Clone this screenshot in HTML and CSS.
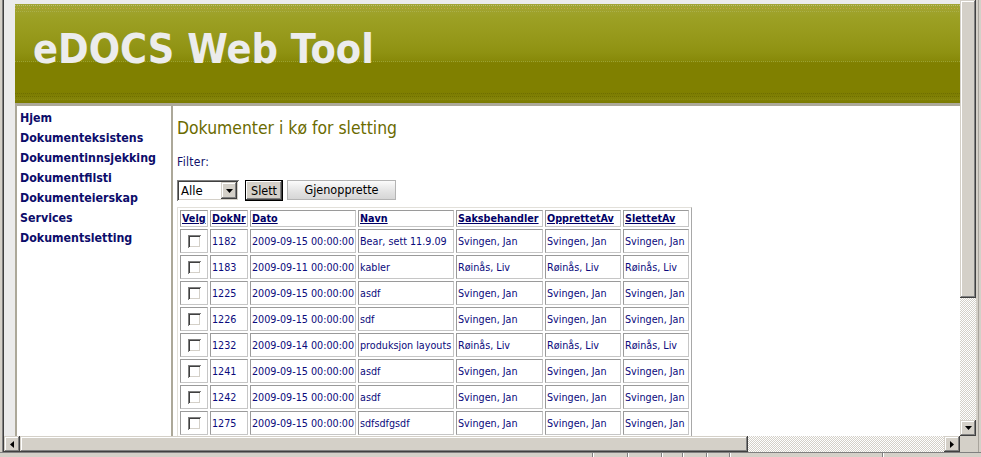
FILE: index.html
```html
<!DOCTYPE html>
<html lang="no">
<head>
<meta charset="utf-8">
<title>eDOCS Web Tool</title>
<link rel="stylesheet" href="styles.css">
</head>
<body>
<div class="window">
  <div class="main-row">
    <div class="frame-left"></div>
    <div class="viewport">
      <div class="page">
        <header class="banner">
          <h1 class="banner-title">eDOCS Web Tool</h1>
        </header>
        <div class="layout">
          <nav class="sidebar">
            <a class="nav-link" href="#">Hjem</a>
            <a class="nav-link" href="#">Dokumenteksistens</a>
            <a class="nav-link" href="#">Dokumentinnsjekking</a>
            <a class="nav-link" href="#">Dokumentfilsti</a>
            <a class="nav-link" href="#">Dokumenteierskap</a>
            <a class="nav-link" href="#">Services</a>
            <a class="nav-link" href="#">Dokumentsletting</a>
          </nav>
          <main class="content">
            <h2 class="page-title">Dokumenter i kø for sletting</h2>
            <div class="filter-label">Filter:</div>
            <div class="toolbar">
              <div class="select">
                <span class="select-value">Alle</span>
                <span class="select-btn"><svg width="7" height="4" viewBox="0 0 7 4"><path d="M0 0h7L3.5 4z" fill="#000"/></svg></span>
              </div>
              <button class="btn btn-default">Slett</button>
              <button class="btn btn-flat">Gjenopprette</button>
            </div>
            <table class="grid">
              <thead>
                <tr>
                  <th class="c-velg"><a href="#">Velg</a></th>
                  <th class="c-nr"><a href="#">DokNr</a></th>
                  <th class="c-dato"><a href="#">Dato</a></th>
                  <th class="c-navn"><a href="#">Navn</a></th>
                  <th class="c-saks"><a href="#">Saksbehandler</a></th>
                  <th class="c-opp"><a href="#">OpprettetAv</a></th>
                  <th class="c-slet"><a href="#">SlettetAv</a></th>
                </tr>
              </thead>
              <tbody>
                <tr><td class="cb"><span class="check"></span></td><td>1182</td><td>2009-09-15 00:00:00</td><td>Bear, sett 11.9.09</td><td>Svingen, Jan</td><td>Svingen, Jan</td><td>Svingen, Jan</td></tr>
                <tr><td class="cb"><span class="check"></span></td><td>1183</td><td>2009-09-11 00:00:00</td><td>kabler</td><td>Røinås, Liv</td><td>Røinås, Liv</td><td>Røinås, Liv</td></tr>
                <tr><td class="cb"><span class="check"></span></td><td>1225</td><td>2009-09-15 00:00:00</td><td>asdf</td><td>Svingen, Jan</td><td>Svingen, Jan</td><td>Svingen, Jan</td></tr>
                <tr><td class="cb"><span class="check"></span></td><td>1226</td><td>2009-09-15 00:00:00</td><td>sdf</td><td>Svingen, Jan</td><td>Svingen, Jan</td><td>Svingen, Jan</td></tr>
                <tr><td class="cb"><span class="check"></span></td><td>1232</td><td>2009-09-14 00:00:00</td><td>produksjon layouts</td><td>Røinås, Liv</td><td>Røinås, Liv</td><td>Røinås, Liv</td></tr>
                <tr><td class="cb"><span class="check"></span></td><td>1241</td><td>2009-09-15 00:00:00</td><td>asdf</td><td>Svingen, Jan</td><td>Svingen, Jan</td><td>Svingen, Jan</td></tr>
                <tr><td class="cb"><span class="check"></span></td><td>1242</td><td>2009-09-15 00:00:00</td><td>asdf</td><td>Svingen, Jan</td><td>Svingen, Jan</td><td>Svingen, Jan</td></tr>
                <tr><td class="cb"><span class="check"></span></td><td>1275</td><td>2009-09-15 00:00:00</td><td>sdfsdfgsdf</td><td>Svingen, Jan</td><td>Svingen, Jan</td><td>Svingen, Jan</td></tr>
              </tbody>
            </table>
          </main>
        </div>
      </div>
    </div>
    <div class="vscroll">
      <div class="vthumb"></div>
      <div class="track"></div>
      <div class="sb-btn"><svg width="7" height="4" viewBox="0 0 7 4"><path d="M0 0h7L3.5 4z" fill="#000"/></svg></div>
    </div>
    <div class="frame-right"></div>
  </div>
  <div class="hscroll-row">
    <div class="frame-left"></div>
    <div class="hscroll">
      <div class="sb-btn"><svg width="4" height="7" viewBox="0 0 4 7"><path d="M4 0v7L0 3.5z" fill="#000"/></svg></div>
      <div class="hthumb"></div>
      <div class="track"></div>
      <div class="sb-btn"><svg width="4" height="7" viewBox="0 0 4 7"><path d="M0 0v7l4-3.5z" fill="#000"/></svg></div>
    </div>
    <div class="corner"></div>
    <div class="frame-right"></div>
  </div>
  <div class="statusbar">
    <div class="status-panel w593"></div>
    <div class="status-panel w35"></div>
    <div class="status-panel w34"></div>
    <div class="status-panel w21"></div>
    <div class="status-panel w24"></div>
    <div class="status-panel w23"></div>
    <div class="status-panel w153"></div>
    <div class="status-panel last"></div>
  </div>
</div>
</body>
</html>
```
FILE: styles.css
```css
* { box-sizing: border-box; }
html, body { margin: 0; padding: 0; }
body {
  width: 981px;
  height: 457px;
  overflow: hidden;
  background: #d4d0c8;
  font-family: "DejaVu Sans Condensed", "DejaVu Sans", sans-serif;
}
.window {
  width: 981px;
  height: 457px;
  display: flex;
  flex-direction: column;
  background: #d4d0c8;
}
.main-row { display: flex; height: 436px; flex: none; }
.frame-left {
  width: 4px;
  flex: none;
  background: #d4d0c8;
  border-right: 1px solid #404040;
  box-shadow: inset -1px 0 0 #808080;
}
.frame-right {
  width: 5px;
  flex: none;
  background: #d4d0c8;
  box-shadow: inset 2px 0 0 #d4d0c8, inset 3px 0 0 #a8a49c;
}
.viewport {
  width: 956px;
  flex: none;
  overflow: hidden;
  background: #ebebeb;
}
.page {
  width: 1180px;
  padding: 4px 0 0 11px;
}
.banner {
  height: 102px;
  border-bottom: 3px solid #aca899;
  padding: 22px 0 0 18px;
  background:
    linear-gradient(90deg, #b9bd78 50%, transparent 50%) 0 1px / 2px 1px repeat-x,
    linear-gradient(90deg, #c9a548 34%, transparent 34%) 0 4px / 3px 1px repeat-x,
    linear-gradient(90deg, #aab04a 50%, transparent 50%) 1px 7px / 2px 1px repeat-x,
    linear-gradient(90deg, #9aa232 50%, transparent 50%) 0 57px / 2px 1px repeat-x,
    linear-gradient(90deg, #6e6e00 50%, transparent 50%) 0 89px / 2px 1px repeat-x,
    linear-gradient(90deg, #6e6e00 50%, transparent 50%) 1px 92px / 2px 1px repeat-x,
    linear-gradient(90deg, #8a8a10 50%, transparent 50%) 0 95px / 2px 1px repeat-x,
    linear-gradient(180deg, #a2a534 0, #9ca024 14px, #979a1c 30px, #8f9212 48px, #888a0a 56px, #808000 59px, #808000 88px, #7d7d02 90px, #838308 94px, #7a7a00 99px);
}
.banner-title {
  margin: 0;
  font: bold 41px/46px "DejaVu Sans Condensed", "DejaVu Sans", sans-serif;
  color: #ececec;
}
.layout { display: flex; min-height: 340px; }
.sidebar {
  width: 158px;
  flex: none;
  background: #fff;
  border-left: 2px solid #aca899;
  border-right: 2px solid #aca899;
  padding: 2px 0 0 3px;
}
.nav-link {
  display: block;
  font: bold 12.3px/20px "DejaVu Sans Condensed", "DejaVu Sans", sans-serif;
  color: #0c0c6a;
  text-decoration: none;
  white-space: nowrap;
}
.content {
  flex: 1;
  background: #fff;
  padding: 12px 0 0 4px;
}
.page-title {
  margin: 0;
  font: normal 17.4px/20px "DejaVu Sans Condensed", "DejaVu Sans", sans-serif;
  color: #6b6b00;
}
.filter-label {
  margin-top: 17px;
  font: 12px/15px "DejaVu Sans Condensed", "DejaVu Sans", sans-serif;
  letter-spacing: 0.3px;
  color: #10106a;
}
.toolbar {
  margin-top: 10px;
  display: flex;
  align-items: flex-start;
  height: 21px;
}
.select {
  width: 62px;
  height: 21px;
  display: flex;
  padding: 2px;
  background: #fff;
  box-shadow: inset 1px 1px 0 #808080, inset -1px -1px 0 #ffffff, inset 2px 2px 0 #404040, inset -2px -2px 0 #d4d0c8;
}
.select-value {
  flex: 1;
  padding-left: 2px;
  font: 13px/17px "DejaVu Sans Condensed", "DejaVu Sans", sans-serif;
  color: #000;
}
.select-btn {
  width: 16px;
  height: 17px;
  display: flex;
  align-items: center;
  justify-content: center;
  background: #d4d0c8;
  box-shadow: inset -1px -1px 0 #404040, inset 1px 1px 0 #d4d0c8, inset -2px -2px 0 #808080, inset 2px 2px 0 #fff;
}
.btn {
  height: 21px;
  padding: 0;
  font: 12.5px/19px "DejaVu Sans Condensed", "DejaVu Sans", sans-serif;
  color: #000;
  text-align: center;
}
.btn-default {
  width: 38px;
  margin-left: 6px;
  border: 1px solid #000;
  background: #d4d0c8;
  box-shadow: inset -1px -1px 0 #404040, inset 1px 1px 0 #fff, inset -2px -2px 0 #808080;
}
.btn-flat {
  width: 109px;
  height: 20px;
  margin-left: 4px;
  border: 1px solid #b4b4b4;
  line-height: 18px;
  background: linear-gradient(180deg, #fbfbfb 0, #eeeeee 30%, #e2e2e2 60%, #d6d6d6 100%);
}
.grid {
  margin-top: 6px;
  border-collapse: separate;
  border-spacing: 2px;
  border: 1px solid;
  border-color: #e2e0da #a8a8a8 #a8a8a8 #e2e0da;
  table-layout: fixed;
  width: 515px;
  font-family: "DejaVu Sans Condensed", "DejaVu Sans", sans-serif;
  font-size: 10.7px;
}
.grid th, .grid td {
  border: 1px solid;
  border-color: #9a9a9a #c6c6c6 #c6c6c6 #9a9a9a;
  padding: 0 1px;
  white-space: nowrap;
  overflow: hidden;
  text-align: left;
  vertical-align: middle;
}
.grid th { height: 17px; font-weight: bold; line-height: 13px; }
.grid th a { color: #000066; text-decoration: underline; }
.grid td { height: 24px; color: #0a0a7c; line-height: 13px; }
.c-velg { width: 28px; }
.c-nr { width: 38px; }
.c-dato { width: 106px; }
.c-navn { width: 96px; }
.c-saks { width: 87px; }
.c-opp { width: 76px; }
.c-slet { width: 66px; }
.grid td.cb { text-align: center; }
.check {
  display: inline-block;
  width: 13px;
  height: 13px;
  vertical-align: middle;
  background: #fff;
  box-shadow: inset 1px 1px 0 #808080, inset -1px -1px 0 #ffffff, inset 2px 2px 0 #404040, inset -2px -2px 0 #d4d0c8;
}
.vscroll {
  width: 16px;
  flex: none;
  display: flex;
  flex-direction: column;
}
.vthumb {
  height: 298px;
  flex: none;
  background: #d4d0c8;
  box-shadow: inset -1px -1px 0 #404040, inset 1px 1px 0 #d4d0c8, inset -2px -2px 0 #808080, inset 2px 2px 0 #fff;
}
.track {
  flex: 1;
  background-color: #fff;
  background-image: conic-gradient(#d4d0c8 25%, #fff 0 50%, #d4d0c8 0 75%, #fff 0);
  background-size: 2px 2px;
}
.sb-btn {
  width: 16px;
  height: 16px;
  flex: none;
  display: flex;
  align-items: center;
  justify-content: center;
  background: #d4d0c8;
  box-shadow: inset -1px -1px 0 #404040, inset 1px 1px 0 #d4d0c8, inset -2px -2px 0 #808080, inset 2px 2px 0 #fff;
}
.hscroll-row { display: flex; height: 16px; flex: none; }
.hscroll { width: 956px; flex: none; display: flex; }
.hthumb {
  width: 728px;
  flex: none;
  background: #d4d0c8;
  box-shadow: inset -1px -1px 0 #404040, inset 1px 1px 0 #d4d0c8, inset -2px -2px 0 #808080, inset 2px 2px 0 #fff;
}
.corner { width: 16px; flex: none; background: #d4d0c8; }
.statusbar {
  height: 5px;
  flex: none;
  display: flex;
  border-top: 1px solid #808080;
  background: #d4d0c8;
}
.status-panel { height: 100%; border-right: 1px solid #808080; box-shadow: 1px 0 0 #fff; }
.w593 { width: 593px; }
.w35 { width: 35px; }
.w34 { width: 34px; }
.w21 { width: 21px; }
.w24 { width: 24px; }
.w23 { width: 23px; }
.w153 { width: 153px; }
.status-panel.last { flex: 1; border-right: 0; box-shadow: none; }
```
